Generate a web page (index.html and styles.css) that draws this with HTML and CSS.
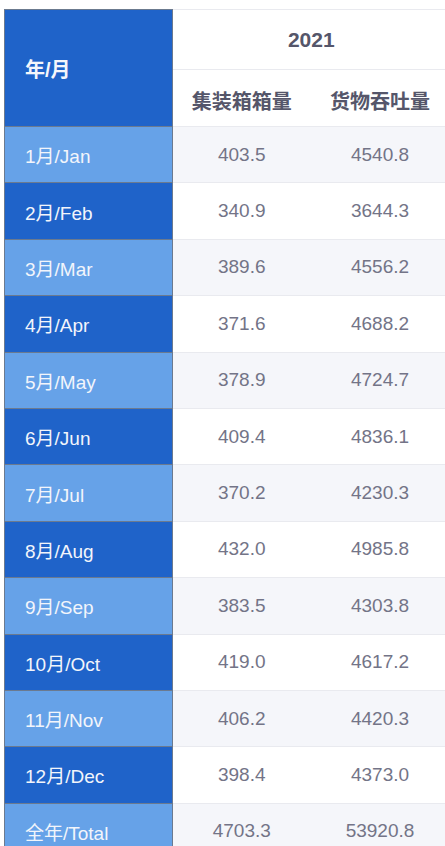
FILE: index.html
```html
<!DOCTYPE html>
<html lang="zh">
<head>
<meta charset="utf-8">
<link rel="stylesheet" href="styles.css">
</head>
<body>
<div class="wrap">
<table class="stats">
  <colgroup><col class="c1"><col class="c2"><col class="c3"></colgroup>
  <thead>
    <tr class="h1">
      <th class="side" rowspan="2">年/月</th>
      <th class="year" colspan="2">2021</th>
    </tr>
    <tr class="h2">
      <th class="sub">集装箱箱量</th>
      <th class="sub">货物吞吐量</th>
    </tr>
  </thead>
  <tbody>
    <tr class="odd"><th class="m light">1月/Jan</th><td>403.5</td><td>4540.8</td></tr>
    <tr><th class="m dark">2月/Feb</th><td>340.9</td><td>3644.3</td></tr>
    <tr class="odd"><th class="m light">3月/Mar</th><td>389.6</td><td>4556.2</td></tr>
    <tr><th class="m dark">4月/Apr</th><td>371.6</td><td>4688.2</td></tr>
    <tr class="odd"><th class="m light">5月/May</th><td>378.9</td><td>4724.7</td></tr>
    <tr><th class="m dark">6月/Jun</th><td>409.4</td><td>4836.1</td></tr>
    <tr class="odd"><th class="m light">7月/Jul</th><td>370.2</td><td>4230.3</td></tr>
    <tr><th class="m dark">8月/Aug</th><td>432.0</td><td>4985.8</td></tr>
    <tr class="odd"><th class="m light">9月/Sep</th><td>383.5</td><td>4303.8</td></tr>
    <tr><th class="m dark">10月/Oct</th><td>419.0</td><td>4617.2</td></tr>
    <tr class="odd"><th class="m light">11月/Nov</th><td>406.2</td><td>4420.3</td></tr>
    <tr><th class="m dark">12月/Dec</th><td>398.4</td><td>4373.0</td></tr>
    <tr class="odd"><th class="m light">全年/Total</th><td>4703.3</td><td>53920.8</td></tr>
  </tbody>
</table>
</div>
</body>
</html>
```

FILE: styles.css
```css
html, body {
  margin: 0;
  padding: 0;
  background: #ffffff;
}
body {
  font-family: "Liberation Sans", Arial, "Noto Sans CJK SC", sans-serif;
}
.wrap {
  width: 445px;
  height: 846px;
  overflow: hidden;
  padding: 9px 0 0 4px;
  box-sizing: border-box;
}
.stats {
  border-collapse: collapse;
  table-layout: fixed;
  width: 445px;
}
.c1 { width: 168px; }
.c2 { width: 138px; }
.c3 { width: 139px; }
.stats th, .stats td {
  padding: 0;
  vertical-align: middle;
}
.h1 { height: 60px; }
.h2 { height: 57px; }
tbody tr { height: 56.4px; }
.side {
  background: #1f63c9;
  color: #f4f6fb;
  font-size: 20px;
  font-weight: bold;
  text-align: left;
  padding-left: 20px !important;
  border: 1px solid #6b7a8f;
}
.year {
  font-size: 21px;
  font-weight: bold;
  color: #55566a;
  text-align: center;
  border-top: 1px solid #e9eaef;
  border-bottom: 1px solid #e9eaef;
}
.sub {
  font-size: 20px;
  font-weight: bold;
  color: #55566a;
  text-align: center;
  padding-top: 4px !important;
  border-bottom: 1px solid #e9eaef;
}
.m {
  font-size: 19px;
  font-weight: normal;
  color: #f2f5fb;
  text-align: left;
  padding-left: 20px !important;
  border: 1px solid #6b7a8f;
}
.light { background: #66a2e8; }
.dark { background: #1f63c9; }
.stats td {
  font-size: 19px;
  color: #737487;
  text-align: center;
  border-bottom: 1px solid #e9eaef;
}
.odd td { background: #f5f6fa; }
```
